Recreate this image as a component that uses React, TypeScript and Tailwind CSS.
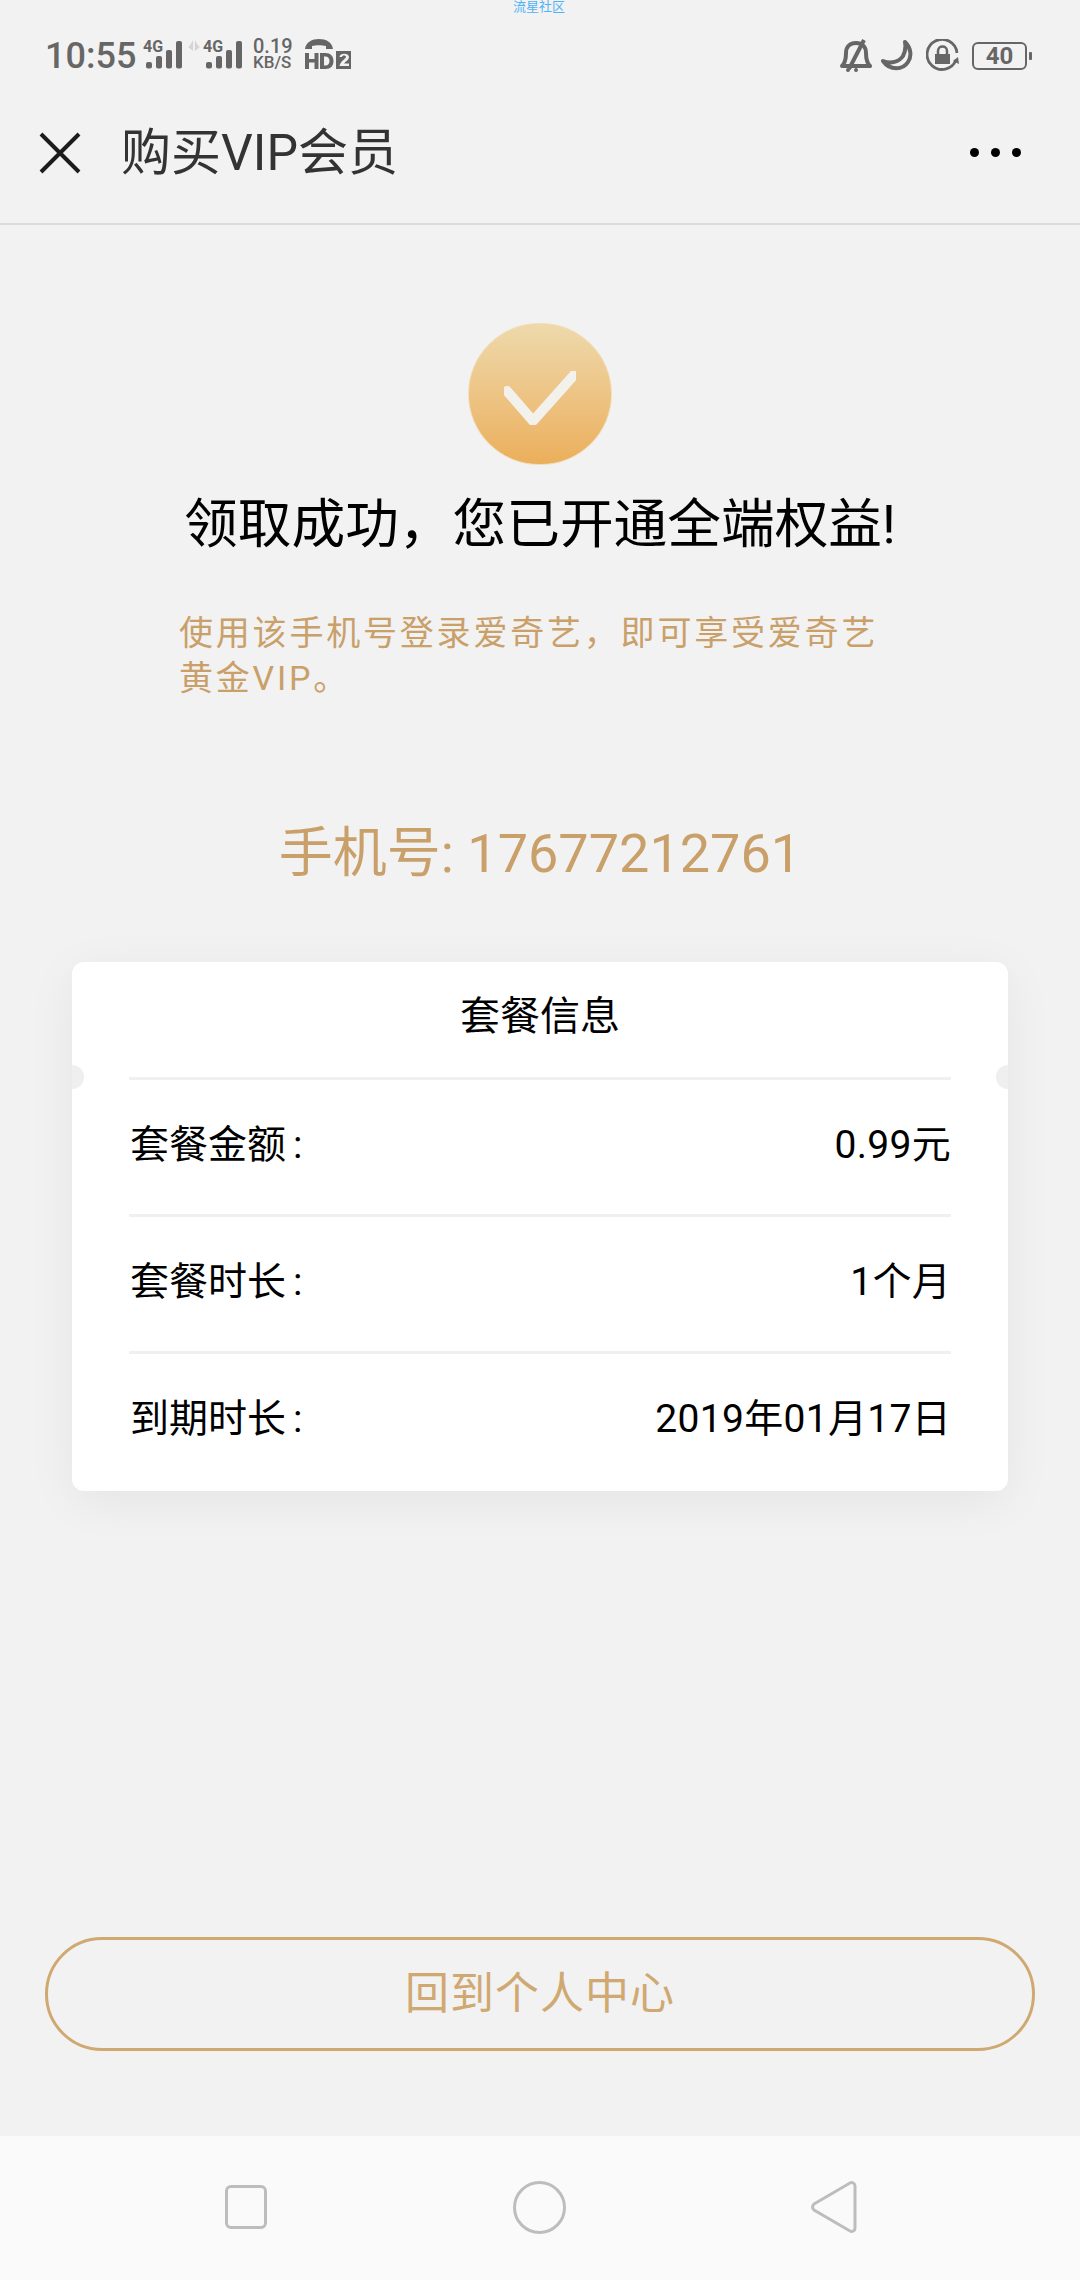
const cjk = "font-['Roboto','Noto_Sans_CJK_SC',sans-serif]";

function SignalBars() {
  return (
    <svg width="36" height="28" viewBox="0 0 36 28" fill="#666">
      <rect x="0" y="21" width="6" height="6.500" rx="2" />
      <rect x="10" y="15" width="6" height="12.500" rx="2" />
      <rect x="20" y="9" width="6" height="18.500" rx="2" />
      <rect x="30" y="0" width="6" height="27.500" rx="2" />
    </svg>
  );
}

function Signal() {
  return (
    <div className="relative h-[28px] w-[38px] pl-[2px]">
      <span className="absolute top-0 -left-[1px] font-['Roboto',sans-serif] text-[16px] leading-[11px] font-bold text-[#666]">4G</span>
      <SignalBars />
    </div>
  );
}

function StatusLeft() {
  return (
    <div className="flex items-start">
      <span className="-mt-[5px] w-[99px] font-['Roboto',sans-serif] text-[36px] leading-[40px] font-medium text-[#666]">10:55</span>
      <Signal />
      <svg className="mt-[-1px] ml-[5px]" width="14" height="11" viewBox="0 0 14 12" fill="#d4d4d4">
        <path d="M6 0v12L0 7h2zM8 0v12l6-5h-2z" />
      </svg>
      <div className="ml-[3px]">
        <Signal />
      </div>
      <div className="-mt-[3px] ml-[11px] flex w-[41px] flex-col font-['Roboto',sans-serif] text-[#666]">
        <span className="text-[20px] leading-[17px] font-medium">0.19</span>
        <span className="text-[17px] leading-[15px] font-medium">KB/S</span>
      </div>
      <svg className="-mt-[2px] ml-[11px]" width="46" height="31" viewBox="0 0 46 31" fill="#666">
        <path d="M0 10C1 3 7 0 14 0s13 3 14 10h-7V7c-4-1-10-1-14 0v3z" />
        <rect x="0" y="14" width="4" height="16" />
        <rect x="9.500" y="14" width="4" height="16" />
        <rect x="3" y="20" width="8" height="3.500" />
        <path fillRule="evenodd" d="M15 14h5.500c5 0 8 3 8 8s-3 8-8 8H15zM19 17.500v9h1.500c2.500 0 4-1.800 4-4.500s-1.500-4.500-4-4.500z" />
        <path fillRule="evenodd" d="M31 12h15v18H31zM34.500 18h2.500c0-2 4-2 4 0 0 1.500-5.500 4-6.500 9h9.500v-2.500h-5c1-1.500 5-3.500 5-6.500 0-4.500-9.500-4.500-9.500 0z" />
      </svg>
    </div>
  );
}

function StatusRight() {
  return (
    <div className="flex items-start">
      <svg className="-mt-[3px]" width="32" height="34" viewBox="0 0 32 34" fill="none" stroke="#666" strokeWidth="4">
        <path d="M2 28c3-3 4-6 4-13 0-6 4-10 10-10s10 4 10 10c0 7 1 10 4 13z" strokeLinejoin="round" />
        <path d="M9 31 24 2" />
        <path d="M8 32h0M16 32h0" strokeLinecap="round" strokeWidth="4" />
      </svg>
      <svg className="-mt-[1px] ml-[9px]" width="33" height="32" viewBox="0 0 33 32" fill="none" stroke="#666" strokeWidth="4">
        <path d="M24 2c6 6 7 14 3 20-5 8-18 9-25-1 8 3 16 1 20-5 2-4 3-9 2-14z" strokeLinejoin="round" />
      </svg>
      <svg className="-mt-[2px] ml-[12px]" width="33" height="33" viewBox="0 0 33 33" fill="none" stroke="#666" strokeWidth="2.800">
        <path d="M30 21A15 15 0 1 1 31 14" />
        <path d="M27 22l5-4 1 7z" fill="#666" stroke="none" />
        <rect x="9" y="15" width="15" height="10" fill="#666" stroke="none" />
        <path d="M12 15v-3c0-6 9-6 9 0v3" strokeWidth="2.500" />
      </svg>
      <div className="mt-[1px] ml-[13px] flex h-[28px] w-[55px] items-center justify-center rounded-[6px] border-[2px] border-[#666] font-['Roboto',sans-serif] text-[24px] font-bold text-[#666]">
        40
      </div>
      <div className="mt-[11px] ml-[2px] h-[8px] w-[3px] rounded-[1px] bg-[#666]" />
    </div>
  );
}

function InfoRow({ label, value }: { label: string; value: string }) {
  return (
    <div className="flex h-[137px] items-center justify-between border-t-[3px] border-[#f0f0f0] pb-[3px] pl-[1px]">
      <span className="text-[39px] text-black">
        {label}
        <span className="ml-[7px]">:</span>
      </span>
      <span className="text-[39px] tracking-[0.3px] text-black">{value}</span>
    </div>
  );
}

export default function App() {
  return (
    <div className={`relative flex h-[2280px] w-[1080px] flex-col bg-[#f2f2f2] ${cjk}`}>
      <span className="absolute top-0 left-[513px] text-[13px] leading-[13px] text-[#4fb2f7]">流星社区</span>

      {/* status bar */}
      <div className="flex h-[78px] items-start justify-between pt-[41px] pr-[48px] pl-[45px]">
        <StatusLeft />
        <StatusRight />
      </div>

      {/* title bar */}
      <div className="flex h-[147px] items-center border-b-[2px] border-[#dcdcdc] pt-[4px] pr-[59px] pl-[39px]">
        <svg width="42" height="42" viewBox="0 0 42 42" stroke="#1c1c1c" strokeWidth="4">
          <path d="M2 2l38 38M40 2 2 40" />
        </svg>
        <span className="ml-[40px] flex-1 text-[50px] leading-[60px] text-[#333]">购买VIP会员</span>
        <div className="flex gap-[12px]">
          <span className="h-[9px] w-[9px] rounded-full bg-black" />
          <span className="h-[9px] w-[9px] rounded-full bg-black" />
          <span className="h-[9px] w-[9px] rounded-full bg-black" />
        </div>
      </div>

      <main className="flex flex-1 flex-col items-center pt-[98px]">
        <div className="flex h-[142px] w-[144px] items-center justify-center rounded-full border-[1px] border-[#f1dfb9] bg-gradient-to-b from-[#eed9ab] to-[#ebaf5b]">
          <svg className="mt-[8px]" width="72" height="54" viewBox="0 0 72 54" fill="none" stroke="#f3f1ec" strokeWidth="10" strokeLinejoin="round" strokeLinecap="round">
            <path d="M3 20 29 50 70 4" />
          </svg>
        </div>
        <h1 className="mt-[25px] text-[53.700px] leading-[70px] font-normal whitespace-nowrap text-black">领取成功，您已开通全端权益!</h1>
        <p className="mt-[51px] w-[722px] text-[34px] leading-[45px] tracking-[2.800px] text-[#c9a06a]">
          使用该手机号登录爱奇艺，即可享受爱奇艺黄金VIP。
        </p>
        <div className="mt-[118px] text-[54px] leading-[70px] text-[#c9a06a]">手机号: 17677212761</div>

        <section className="relative mt-[73px] w-[936px] overflow-hidden rounded-[12px] bg-white px-[57px] pb-[3px] shadow-[0_10px_50px_rgba(0,0,0,0.06)]">
          <span className="absolute top-[103px] -left-[12px] h-[24px] w-[24px] rounded-full bg-[#efefef]" />
          <span className="absolute top-[103px] -right-[12px] h-[24px] w-[24px] rounded-full bg-[#efefef]" />
          <div className="flex h-[115px] items-center justify-center pb-[5px] text-[40px] text-black">套餐信息</div>
          <InfoRow label="套餐金额" value="0.99元" />
          <InfoRow label="套餐时长" value="1个月" />
          <InfoRow label="到期时长" value="2019年01月17日" />
        </section>

        <button
          type="button"
          className="mt-auto mb-[85px] flex h-[114px] w-[990px] items-center justify-center rounded-full border-[3px] border-[#cfa971] text-[44px] tracking-[1px] text-[#cfa971]"
        >
          回到个人中心
        </button>
      </main>

      {/* navigation bar */}
      <nav className="flex h-[144px] items-center bg-[#fafafa] pb-[2px] pl-[225px]">
        <span className="h-[44px] w-[42px] rounded-[6px] border-[3px] border-[#bdbdbd]" />
        <span className="ml-[246px] h-[53px] w-[53px] rounded-full border-[3px] border-[#bdbdbd]" />
        <svg className="ml-[245px]" width="46" height="54" viewBox="0 0 46 54" fill="none" stroke="#bdbdbd" strokeWidth="3">
          <path d="M3 24 39 3c2-1 5 0 5 3v42c0 3-3 4-5 3L3 30c-2-2-2-4 0-6z" />
        </svg>
      </nav>
    </div>
  );
}
